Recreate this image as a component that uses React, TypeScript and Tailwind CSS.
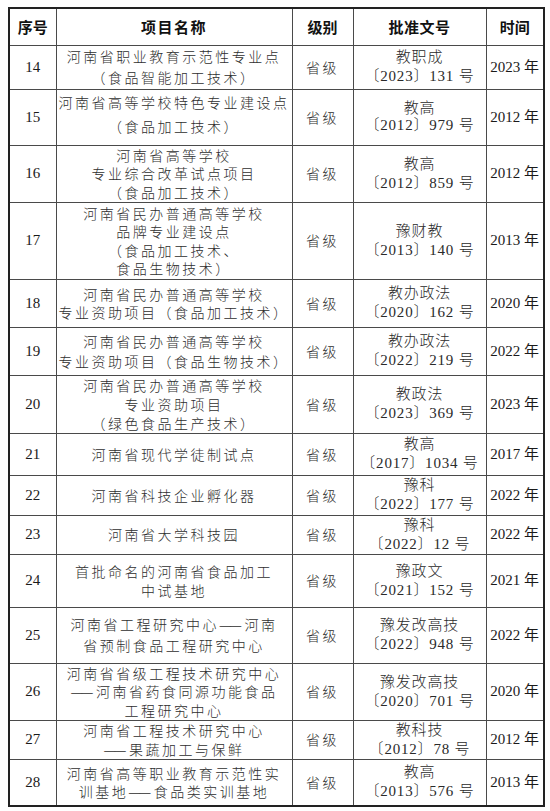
const rows = [
  { no: "14", h: "h-[44px]", lh: "leading-[21px]", pad: "", name: ["河南省职业教育示范性专业点", "（食品智能加工技术）"], dh: "leading-[19px]", doc: ["教职成", "〔2023〕131 号"], year: "2023" },
  { no: "15", h: "h-[55px]", lh: "leading-[24px]", pad: "pb-[7px]", name: ["河南省高等学校特色专业建设点", "（食品加工技术）"], dh: "leading-[17px]", doc: ["教高", "〔2012〕979 号"], year: "2012" },
  { no: "16", h: "h-[57px]", lh: "leading-[18.5px]", pad: "", name: ["河南省高等学校", "专业综合改革试点项目", "（食品加工技术）"], dh: "leading-[19px]", doc: ["教高", "〔2012〕859 号"], year: "2012" },
  { no: "17", h: "h-[77px]", lh: "leading-[18.5px]", pad: "", name: ["河南省民办普通高等学校", "品牌专业建设点", "（食品加工技术、", "食品生物技术）"], dh: "leading-[19px]", doc: ["豫财教", "〔2013〕140 号"], year: "2013" },
  { no: "18", h: "h-[48px]", lh: "leading-[18.5px]", pad: "", name: ["河南省民办普通高等学校", "专业资助项目（食品加工技术）"], dh: "leading-[19px]", doc: ["教办政法", "〔2020〕162 号"], year: "2020" },
  { no: "19", h: "h-[48px]", lh: "leading-[20px]", pad: "", name: ["河南省民办普通高等学校", "专业资助项目（食品生物技术）"], dh: "leading-[19px]", doc: ["教办政法", "〔2022〕219 号"], year: "2022" },
  { no: "20", h: "h-[58px]", lh: "leading-[19px]", pad: "", name: ["河南省民办普通高等学校", "专业资助项目", "（绿色食品生产技术）"], dh: "leading-[19px]", doc: ["教政法", "〔2023〕369 号"], year: "2023" },
  { no: "21", h: "h-[42px]", lh: "leading-[19px]", pad: "", name: ["河南省现代学徒制试点"], dh: "leading-[19px]", doc: ["教高", "〔2017〕1034 号"], year: "2017" },
  { no: "22", h: "h-[40px]", lh: "leading-[19px]", pad: "", name: ["河南省科技企业孵化器"], dh: "leading-[19px]", doc: ["豫科", "〔2022〕177 号"], year: "2022" },
  { no: "23", h: "h-[39px]", lh: "leading-[19px]", pad: "", name: ["河南省大学科技园"], dh: "leading-[19px]", doc: ["豫科", "〔2022〕12 号"], year: "2022" },
  { no: "24", h: "h-[53px]", lh: "leading-[18.5px]", pad: "", name: ["首批命名的河南省食品加工", "中试基地"], dh: "leading-[19px]", doc: ["豫政文", "〔2021〕152 号"], year: "2021" },
  { no: "25", h: "h-[56px]", lh: "leading-[21px]", pad: "", name: ["河南省工程研究中心——河南", "省预制食品工程研究中心"], dh: "leading-[19px]", doc: ["豫发改高技", "〔2022〕948 号"], year: "2022" },
  { no: "26", h: "h-[57px]", lh: "leading-[18.5px]", pad: "", name: ["河南省省级工程技术研究中心", "——河南省药食同源功能食品", "工程研究中心"], dh: "leading-[19px]", doc: ["豫发改高技", "〔2020〕701 号"], year: "2020" },
  { no: "27", h: "h-[39px]", lh: "leading-[19px]", pad: "", name: ["河南省工程技术研究中心", "——果蔬加工与保鲜"], dh: "leading-[19px]", doc: ["教科技", "〔2012〕78 号"], year: "2012" },
  { no: "28", h: "h-[47px]", lh: "leading-[18.5px]", pad: "", name: ["河南省高等职业教育示范性实", "训基地——食品类实训基地"], dh: "leading-[19px]", doc: ["教高", "〔2013〕576 号"], year: "2013" },
];

const cell = "border border-[#4a4a4a] p-0 text-center align-middle";
const serif = "font-['Liberation_Serif','Noto_Sans_CJK_SC',serif]";
const cjk = "font-['Noto_Sans_CJK_SC',sans-serif]";

// draw "——" as one joined rule, like the source document
function NameLine({ text }: { text: string }) {
  const parts = text.split("——");
  return (
    <div>
      {parts.map((p, i) => (
        <span key={i}>
          {i > 0 && (
            <>
              <span className="tracking-[-2px]">—</span>—
            </>
          )}
          {p}
        </span>
      ))}
    </div>
  );
}

export default function App() {
  return (
    <div className="min-h-[811px] w-[550px] bg-white pt-[7px] pl-[8px]">
      <table className="w-[535px] table-fixed border-collapse border-2 border-[#222]">
        <colgroup>
          <col className="w-[47px]" />
          <col className="w-[236px]" />
          <col className="w-[61px]" />
          <col className="w-[133px]" />
          <col className="w-[58px]" />
        </colgroup>
        <thead>
          <tr className="h-[37px]">
            <th className={`${cell} ${cjk} text-[15px] font-bold text-[#111]`}>序号</th>
            <th className={`${cell} ${cjk} text-[15px] font-bold tracking-[1.5px] text-[#111]`}>项目名称</th>
            <th className={`${cell} ${cjk} text-[15px] font-bold text-[#111]`}>级别</th>
            <th className={`${cell} ${cjk} text-[15px] font-bold tracking-[0.5px] text-[#111]`}>批准文号</th>
            <th className={`${cell} ${cjk} text-[15px] font-bold text-[#111]`}>时间</th>
          </tr>
        </thead>
        <tbody>
          {rows.map((r) => (
            <tr key={r.no} className={r.h}>
              <td className={`${cell} ${serif} text-[15px] text-[#1a1a1a]`}>{r.no}</td>
              <td className={`${cell} ${cjk} ${r.lh} ${r.pad} text-[14px] font-light tracking-[2.5px] text-[#2e2e2e] whitespace-nowrap`}>
                {r.name.map((l) => (
                  <NameLine key={l} text={l} />
                ))}
              </td>
              <td className={`${cell} ${cjk} text-[14px] font-light tracking-[2.5px] text-[#2e2e2e]`}>省级</td>
              <td className={`${cell} ${serif} ${r.dh} text-[15px] font-light tracking-[0.8px] text-[#2a2a2a] whitespace-nowrap`}>
                {r.doc.map((l) => (
                  <div key={l}>{l}</div>
                ))}
              </td>
              <td className={`${cell} ${serif} text-[15px] text-[#1a1a1a] whitespace-nowrap`}>{r.year} 年</td>
            </tr>
          ))}
        </tbody>
      </table>
    </div>
  );
}
